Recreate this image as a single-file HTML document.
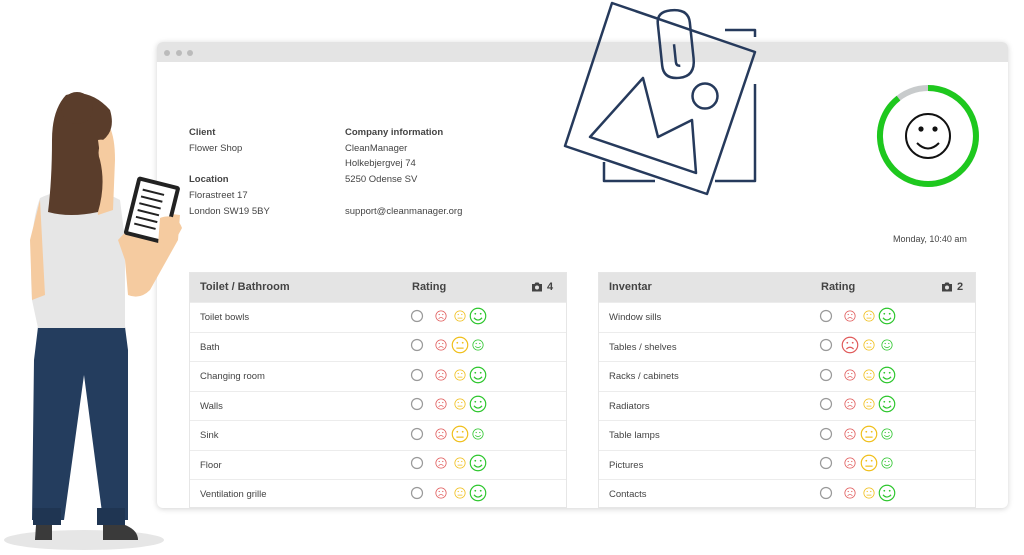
<!DOCTYPE html>
<html><head><meta charset="utf-8"><style>
*{margin:0;padding:0;box-sizing:border-box}
body{width:1024px;height:555px;background:#fff;position:relative;overflow:hidden;font-family:"Liberation Sans",sans-serif;color:#444}
.win{position:absolute;left:157px;top:42px;width:851px;height:466px;background:#fff;border-radius:6px;box-shadow:0 1px 6px rgba(0,0,0,.18);overflow:hidden}
.bar{height:20px;background:#e4e4e4}
.t{position:absolute;font-size:9.5px;color:#444;white-space:nowrap}
.b{font-weight:bold;color:#444}
.tbl{position:absolute;top:272px;width:378px;height:236px;border:1px solid #e6e6e6;background:#fff}
.hd{height:29px;background:#e4e4e4;font-size:11px;font-weight:bold;color:#444;position:relative}
.hd span{position:absolute;top:8px}
.row{height:29.5px;border-top:1px solid #ececec;font-size:9.5px;padding:9px 0 0 10px;color:#444}
</style></head><body>
<svg width="1024" height="555" style="position:absolute;left:0;top:0">
<ellipse cx="84" cy="540" rx="80" ry="10" fill="#e6e6e6"/>
</svg>
<div class="win"><div class="bar"></div>
<svg style="position:absolute;left:0;top:0" width="60" height="20"><circle cx="10" cy="11" r="3" fill="#bbb"/><circle cx="22" cy="11" r="3" fill="#bbb"/><circle cx="33" cy="11" r="3" fill="#bbb"/></svg>
</div>
<div class="t b" style="left:189px;top:127px">Client</div>
<div class="t" style="left:189px;top:143px">Flower Shop</div>
<div class="t b" style="left:189px;top:174px">Location</div>
<div class="t" style="left:189px;top:190px">Florastreet 17</div>
<div class="t" style="left:189px;top:206px">London SW19 5BY</div>
<div class="t b" style="left:345px;top:127px">Company information</div>
<div class="t" style="left:345px;top:143px">CleanManager</div>
<div class="t" style="left:345px;top:158px">Holkebjergvej 74</div>
<div class="t" style="left:345px;top:174px">5250 Odense SV</div>
<div class="t" style="left:345px;top:206px">support@cleanmanager.org</div>
<div class="t" style="left:893px;top:234px;font-size:9px">Monday, 10:40 am</div>

<div class="tbl" style="left:189px">
<div class="hd"><span style="left:10px">Toilet / Bathroom</span><span style="left:222px">Rating</span><span style="left:357px">4</span></div>
<div class="row">Toilet bowls</div><div class="row">Bath</div><div class="row">Changing room</div><div class="row">Walls</div><div class="row">Sink</div><div class="row">Floor</div><div class="row">Ventilation grille</div>
</div>
<div class="tbl" style="left:598px">
<div class="hd"><span style="left:10px">Inventar</span><span style="left:222px">Rating</span><span style="left:358px">2</span></div>
<div class="row">Window sills</div><div class="row">Tables / shelves</div><div class="row">Racks / cabinets</div><div class="row">Radiators</div><div class="row">Table lamps</div><div class="row">Pictures</div><div class="row">Contacts</div>
</div>

<svg width="1024" height="555" style="position:absolute;left:0;top:0">
<defs>
<symbol id="s" viewBox="-10 -10 20 20"><g fill="none" stroke="#e05a5a" stroke-width="1.3"><circle r="8.6"/><path d="M-4 4.5Q0 0.5 4 4.5"/></g><circle cx="-3" cy="-2.5" r="1" fill="#e05a5a"/><circle cx="3" cy="-2.5" r="1" fill="#e05a5a"/></symbol>
<symbol id="n" viewBox="-10 -10 20 20"><g fill="none" stroke="#f0bf1a" stroke-width="1.3"><circle r="8.6"/><path d="M-4 3.5H4"/></g><circle cx="-3" cy="-2.5" r="1" fill="#f0bf1a"/><circle cx="3" cy="-2.5" r="1" fill="#f0bf1a"/></symbol>
<symbol id="h" viewBox="-10 -10 20 20"><g fill="none" stroke="#2dc62d" stroke-width="1.3"><circle r="8.6"/><path d="M-4.5 2Q0 7 4.5 2"/></g><circle cx="-3" cy="-2.5" r="1" fill="#2dc62d"/><circle cx="3" cy="-2.5" r="1" fill="#2dc62d"/></symbol>
<symbol id="cam" viewBox="0 0 12 10"><path d="M1 2h2.5l1-1.5h3l1 1.5H11v7.5H1z" fill="#444"/><circle cx="6" cy="5.5" r="2" fill="#e4e4e4"/></symbol>
</defs>
<use href="#cam" x="531" y="282" width="12" height="10"/>
<use href="#cam" x="941" y="282" width="12" height="10"/>
<g fill="none" stroke="#999" stroke-width="1.2">
<circle cx="417" cy="316" r="5.5"/><circle cx="417" cy="345" r="5.5"/><circle cx="417" cy="375" r="5.5"/><circle cx="417" cy="404" r="5.5"/><circle cx="417" cy="434" r="5.5"/><circle cx="417" cy="463" r="5.5"/><circle cx="417" cy="493" r="5.5"/>
<circle cx="826" cy="316" r="5.5"/><circle cx="826" cy="345" r="5.5"/><circle cx="826" cy="375" r="5.5"/><circle cx="826" cy="404" r="5.5"/><circle cx="826" cy="434" r="5.5"/><circle cx="826" cy="463" r="5.5"/><circle cx="826" cy="493" r="5.5"/>
</g>
<use href="#s" x="435" y="310" width="12" height="12"/><use href="#n" x="454" y="310" width="12" height="12"/><use href="#h" x="469" y="307" width="18" height="18"/>
<use href="#s" x="435" y="339" width="12" height="12"/><use href="#n" x="451" y="336" width="18" height="18"/><use href="#h" x="472" y="339" width="12" height="12"/>
<use href="#s" x="435" y="369" width="12" height="12"/><use href="#n" x="454" y="369" width="12" height="12"/><use href="#h" x="469" y="366" width="18" height="18"/>
<use href="#s" x="435" y="398" width="12" height="12"/><use href="#n" x="454" y="398" width="12" height="12"/><use href="#h" x="469" y="395" width="18" height="18"/>
<use href="#s" x="435" y="428" width="12" height="12"/><use href="#n" x="451" y="425" width="18" height="18"/><use href="#h" x="472" y="428" width="12" height="12"/>
<use href="#s" x="435" y="457" width="12" height="12"/><use href="#n" x="454" y="457" width="12" height="12"/><use href="#h" x="469" y="454" width="18" height="18"/>
<use href="#s" x="435" y="487" width="12" height="12"/><use href="#n" x="454" y="487" width="12" height="12"/><use href="#h" x="469" y="484" width="18" height="18"/>
<use href="#s" x="844" y="310" width="12" height="12"/><use href="#n" x="863" y="310" width="12" height="12"/><use href="#h" x="878" y="307" width="18" height="18"/>
<use href="#s" x="841" y="336" width="18" height="18"/><use href="#n" x="863" y="339" width="12" height="12"/><use href="#h" x="881" y="339" width="12" height="12"/>
<use href="#s" x="844" y="369" width="12" height="12"/><use href="#n" x="863" y="369" width="12" height="12"/><use href="#h" x="878" y="366" width="18" height="18"/>
<use href="#s" x="844" y="398" width="12" height="12"/><use href="#n" x="863" y="398" width="12" height="12"/><use href="#h" x="878" y="395" width="18" height="18"/>
<use href="#s" x="844" y="428" width="12" height="12"/><use href="#n" x="860" y="425" width="18" height="18"/><use href="#h" x="881" y="428" width="12" height="12"/>
<use href="#s" x="844" y="457" width="12" height="12"/><use href="#n" x="860" y="454" width="18" height="18"/><use href="#h" x="881" y="457" width="12" height="12"/>
<use href="#s" x="844" y="487" width="12" height="12"/><use href="#n" x="863" y="487" width="12" height="12"/><use href="#h" x="878" y="484" width="18" height="18"/>

<circle cx="928" cy="136" r="48" fill="none" stroke="#c8cbcc" stroke-width="6"/>
<path d="M928 88A48 48 0 1 1 898.5 98.1" fill="none" stroke="#1ec81e" stroke-width="6"/>
<g fill="none" stroke="#111" stroke-width="2"><circle cx="928" cy="136" r="22"/><path d="M917 143Q928 154 939 143"/></g>
<circle cx="921" cy="129" r="2.6" fill="#111"/><circle cx="935" cy="129" r="2.6" fill="#111"/>

<g fill="none" stroke="#263a5c" stroke-width="2.5" stroke-linejoin="round">
<path d="M725 30H755V37M755 84V181H715M655 181H604V162"/>
<path d="M612 3L755 52L707 194L565 146Z"/>
<path d="M643 78L658 137L692 120L696 173L590 137Z"/>
<circle cx="705" cy="96" r="12.5"/>
<g transform="rotate(-6 676 44)"><path d="M660 46V22Q660 10 674 10Q692 10 692 24V60Q692 78 676 78Q660 78 660 64V44M674 44V62Q674 66 678 66"/></g>
</g>

<path d="M38 327H125L128 350V520H103L84 375L64 520H32L34 360Z" fill="#243d5e"/>
<rect x="33" y="508" width="28" height="17" fill="#1f3552"/><rect x="97" y="508" width="28" height="17" fill="#1f3552"/>
<path d="M36 525H52V540H35Z" fill="#3a3a3a"/><path d="M103 525H125Q138 530 138 540H103Z" fill="#3a3a3a"/>
<path d="M40 198Q60 188 100 190L120 200L125 240L125 328H38L32 300Q28 230 40 198Z" fill="#e6e6e6"/>
<path d="M30 240L40 200L45 295L32 300Z" fill="#f5cba0"/>
<path d="M118 240L132 225L155 212L180 215L178 240L150 290Q140 300 128 295L125 260Z" fill="#f5cba0"/>
<path d="M88 118Q115 110 115 160L113 210L98 215Z" fill="#f5cba0"/>
<path d="M66 95Q90 88 110 110Q116 130 103 140Q96 150 100 160Q106 185 98 212Q70 218 48 212Q52 180 52 140Q52 110 66 95Z" fill="#5a3d2b"/>
<circle cx="77" cy="108" r="16" fill="#5a3d2b"/>
<path d="M98 140Q108 138 108 148Q108 156 100 155Z" fill="#f5cba0"/>
<g transform="rotate(14 150 210)"><rect x="130" y="180" width="44" height="60" rx="3" fill="#222"/><rect x="134" y="184" width="36" height="52" fill="#fff"/>
<g stroke="#222" stroke-width="2"><path d="M138 192H160M138 199H160M138 206H160M138 213H160M138 220H160M138 227H160"/></g></g>
<path d="M160 218Q176 212 182 228L170 250L158 245Z" fill="#f5cba0"/>
</svg>
</body></html>
